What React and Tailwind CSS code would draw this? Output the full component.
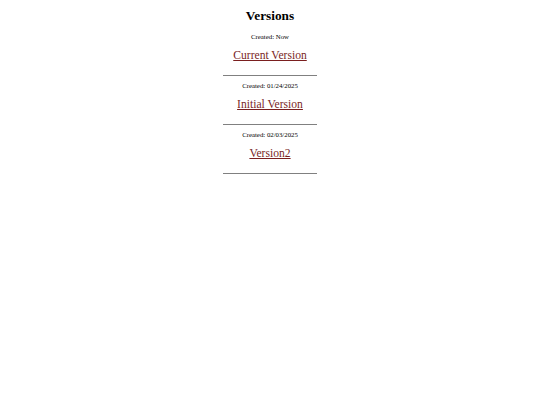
export default function App() {
  const items = [
    { created: "Now", name: "Current Version" },
    { created: "01/24/2025", name: "Initial Version" },
    { created: "02/03/2025", name: "Version2" },
  ];
  return (
    <div className="w-[540px] h-[405px] bg-white flex flex-col items-center text-black font-['Liberation_Serif','Times_New_Roman',serif]">
      <h1 className="mt-[8px] text-[13.3px] leading-[16px] font-bold">Versions</h1>
      <div className="mt-[8px] flex flex-col items-center">
        {items.map((it) => (
          <div key={it.name} className="flex flex-col items-center">
            <div className="text-[6.8px] leading-[10px]">Created: {it.created}</div>
            <a href="#" className="mt-[6px] text-[11.6px] leading-[15px] text-[#7a1f1f] underline">{it.name}</a>
            <div className="mt-[12px] mb-[5px] w-[94px] h-px bg-[#808080]" />
          </div>
        ))}
      </div>
    </div>
  );
}
